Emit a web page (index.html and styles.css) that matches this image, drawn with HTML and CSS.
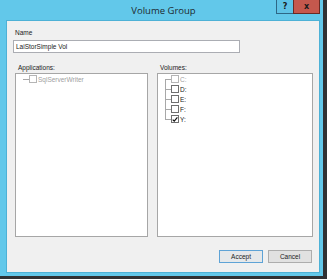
FILE: index.html
```html
<!DOCTYPE html>
<html>
<head>
<meta charset="utf-8">
<link rel="stylesheet" href="styles.css">
</head>
<body>
<div class="window">
  <div class="titlebar">
    <span class="title">Volume Group</span>
    <div class="caption-buttons">
      <span class="cap-btn help">?</span>
      <span class="cap-btn close">x</span>
    </div>
  </div>
  <div class="client">
    <div class="label">Name</div>
    <div class="textbox">LaiStorSimple Vol</div>
    <div class="columns">
      <div class="col col-apps">
        <div class="label">Applications:</div>
        <div class="listbox">
          <div class="row disabled">
            <span class="twig solo"></span>
            <span class="check"></span>
            <span class="text">SqlServerWriter</span>
          </div>
        </div>
      </div>
      <div class="col col-vols">
        <div class="label">Volumes:</div>
        <div class="listbox">
          <div class="row disabled">
            <span class="twig first"></span>
            <span class="check"></span>
            <span class="text">C:</span>
          </div>
          <div class="row">
            <span class="twig mid"></span>
            <span class="check"></span>
            <span class="text">D:</span>
          </div>
          <div class="row">
            <span class="twig mid"></span>
            <span class="check"></span>
            <span class="text">E:</span>
          </div>
          <div class="row">
            <span class="twig mid"></span>
            <span class="check"></span>
            <span class="text">F:</span>
          </div>
          <div class="row">
            <span class="twig last"></span>
            <span class="check checked"><svg width="7" height="7" viewBox="0 0 7 7"><path d="M0.8 3.6 L2.6 5.4 L6.3 1.0" fill="none" stroke="#111" stroke-width="1.4"/></svg></span>
            <span class="text">Y:</span>
          </div>
        </div>
      </div>
    </div>
    <div class="buttons">
      <span class="btn default">Accept</span>
      <span class="btn">Cancel</span>
    </div>
  </div>
</div>
</body>
</html>
```

FILE: styles.css
```css
html, body {
  margin: 0;
  padding: 0;
}
body {
  width: 327px;
  height: 279px;
  background: #2f3133;
  overflow: hidden;
  font-family: "Liberation Sans", Arial, sans-serif;
}
.window {
  width: 323px;
  height: 276px;
  background: #62c8ea;
  display: flex;
  flex-direction: column;
}
.titlebar {
  height: 20px;
  display: flex;
  justify-content: center;
  align-items: center;
  position: relative;
}
.title {
  font-family: "Open Sans", "Noto Sans", sans-serif;
  font-size: 9.5px;
  color: #1e2a30;
  margin-left: 4px;
  margin-top: 1px;
}
.caption-buttons {
  position: absolute;
  top: 0;
  right: 3px;
  display: flex;
}
.cap-btn {
  height: 14px;
  box-sizing: border-box;
  display: flex;
  align-items: center;
  justify-content: center;
  font-family: "DejaVu Sans", sans-serif;
  font-weight: bold;
  font-size: 8px;
  color: #1a1a1a;
}
.help {
  width: 17px;
  background: #5fc3e6;
  border: 1px solid #2d6786;
  border-top: none;
  border-right: none;
}
.close {
  width: 27px;
  background: #c5584d;
  border: 1px solid #6a2a24;
  border-top: none;
}
.client {
  flex: 1;
  margin: 0 3px 3px 6px;
  background: #f0f0f0;
  border: 1px solid #4db1d6;
  box-sizing: border-box;
  padding: 7px 6px 0 8px;
  display: flex;
  flex-direction: column;
  font-size: 6.5px;
  color: #1a1a1a;
}
.label {
  height: 10px;
  line-height: 10px;
  font-size: 6.5px;
  padding-left: 0;
}
.textbox {
  margin: 2px 0 0 -2px;
  width: 227px;
  height: 13px;
  box-sizing: border-box;
  border: 1px solid #abadb3;
  background: #fff;
  line-height: 11px;
  padding-left: 2px;
  font-size: 6.5px;
}
.columns {
  display: flex;
  gap: 9px;
  margin-top: 10px;
}
.col-apps {
  width: 133px;
}
.col-vols {
  width: 156px;
}
.col .label {
  padding-left: 3px;
}
.listbox {
  height: 164px;
  box-sizing: border-box;
  border: 1px solid #a6a6a6;
  background: #fff;
  padding: 0 0 0 7px;
}
.row {
  display: flex;
  align-items: center;
  height: 10px;
  font-size: 6.5px;
  color: #1a1a1a;
}
.listbox .row:first-child {
  margin-top: 0;
}
.twig {
  width: 6px;
  height: 10px;
  flex: none;
}
.twig.solo {
  background: linear-gradient(#a8a8a8, #a8a8a8) 0 5px / 6px 1px no-repeat;
}
.twig.first {
  background:
    linear-gradient(#a8a8a8, #a8a8a8) 0 5px / 6px 1px no-repeat,
    linear-gradient(#a8a8a8, #a8a8a8) 0 5px / 1px 5px no-repeat;
}
.twig.mid {
  background:
    linear-gradient(#a8a8a8, #a8a8a8) 0 5px / 6px 1px no-repeat,
    linear-gradient(#a8a8a8, #a8a8a8) 0 0 / 1px 10px no-repeat;
}
.twig.last {
  background:
    linear-gradient(#a8a8a8, #a8a8a8) 0 5px / 6px 1px no-repeat,
    linear-gradient(#a8a8a8, #a8a8a8) 0 0 / 1px 6px no-repeat;
}
.check {
  width: 8px;
  height: 8px;
  box-sizing: border-box;
  border: 1px solid #6f6f6f;
  background: #fff;
  flex: none;
  display: flex;
  align-items: center;
  justify-content: center;
}
.check svg {
  display: block;
}
.row.disabled .check {
  border-color: #b5b5b5;
}
.row.disabled .text {
  color: #a0a0a0;
}
.text {
  margin-left: 1px;
  white-space: nowrap;
}
.buttons {
  display: flex;
  justify-content: flex-end;
  gap: 5px;
  margin-top: 13px;
  padding-right: 1px;
}
.btn {
  width: 44px;
  height: 13px;
  box-sizing: border-box;
  border: 1px solid #adadad;
  background: #e1e1e1;
  display: flex;
  align-items: center;
  justify-content: center;
  font-size: 6.5px;
  color: #1a1a1a;
}
.btn.default {
  border-color: #5ea3d6;
  background: #e5e8ea;
}
```
